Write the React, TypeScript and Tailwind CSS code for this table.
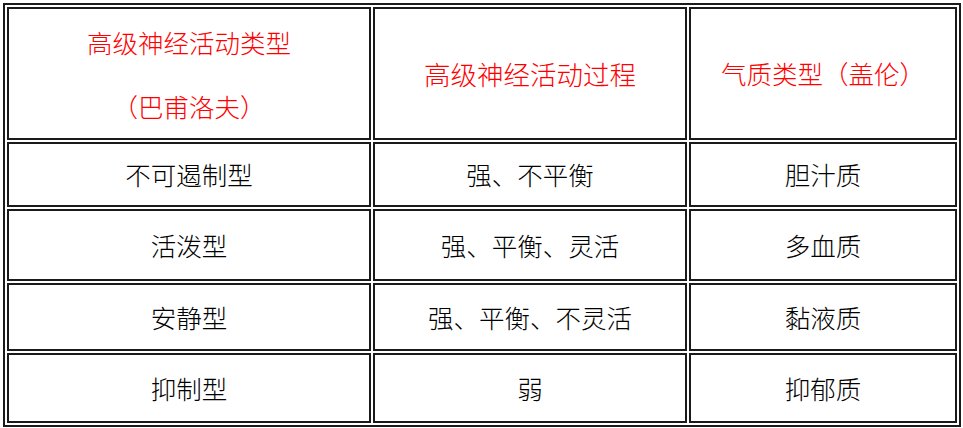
const font = "font-['Noto_Sans_CJK_SC','Noto_Sans',sans-serif] font-light";

const rows = [
  ["不可遏制型", "强、不平衡", "胆汁质"],
  ["活泼型", "强、平衡、灵活", "多血质"],
  ["安静型", "强、平衡、不灵活", "黏液质"],
  ["抑制型", "弱", "抑郁质"],
];

function Cell({ children, className = "" }: { children: React.ReactNode; className?: string }) {
  return (
    <div className={`flex flex-col items-center justify-center border-2 border-[#1a1a1a] text-center ${className}`}>
      {children}
    </div>
  );
}

export default function App() {
  return (
    <div className={`bg-white p-[3px] ${font}`}>
      <div className="grid w-[958px] grid-cols-[364px_314px_268px] grid-rows-[133px_65px_72px_68px_70px] gap-[2px] border-2 border-[#1a1a1a] p-[2px]">
        <Cell className="text-[25.5px] text-[#ff0000]">
          <span className="leading-[64px]">高级神经活动类型</span>
          <span className="leading-[64px]">（巴甫洛夫）</span>
        </Cell>
        <Cell className="text-[26.5px] text-[#ff0000]">高级神经活动过程</Cell>
        <Cell className="text-[25.5px] text-[#ff0000]">气质类型（盖伦）</Cell>
        {rows.map((r) =>
          r.map((t, i) => (
            <Cell key={r[0] + i} className="text-[25.5px] text-black">
              {t}
            </Cell>
          ))
        )}
      </div>
    </div>
  );
}
